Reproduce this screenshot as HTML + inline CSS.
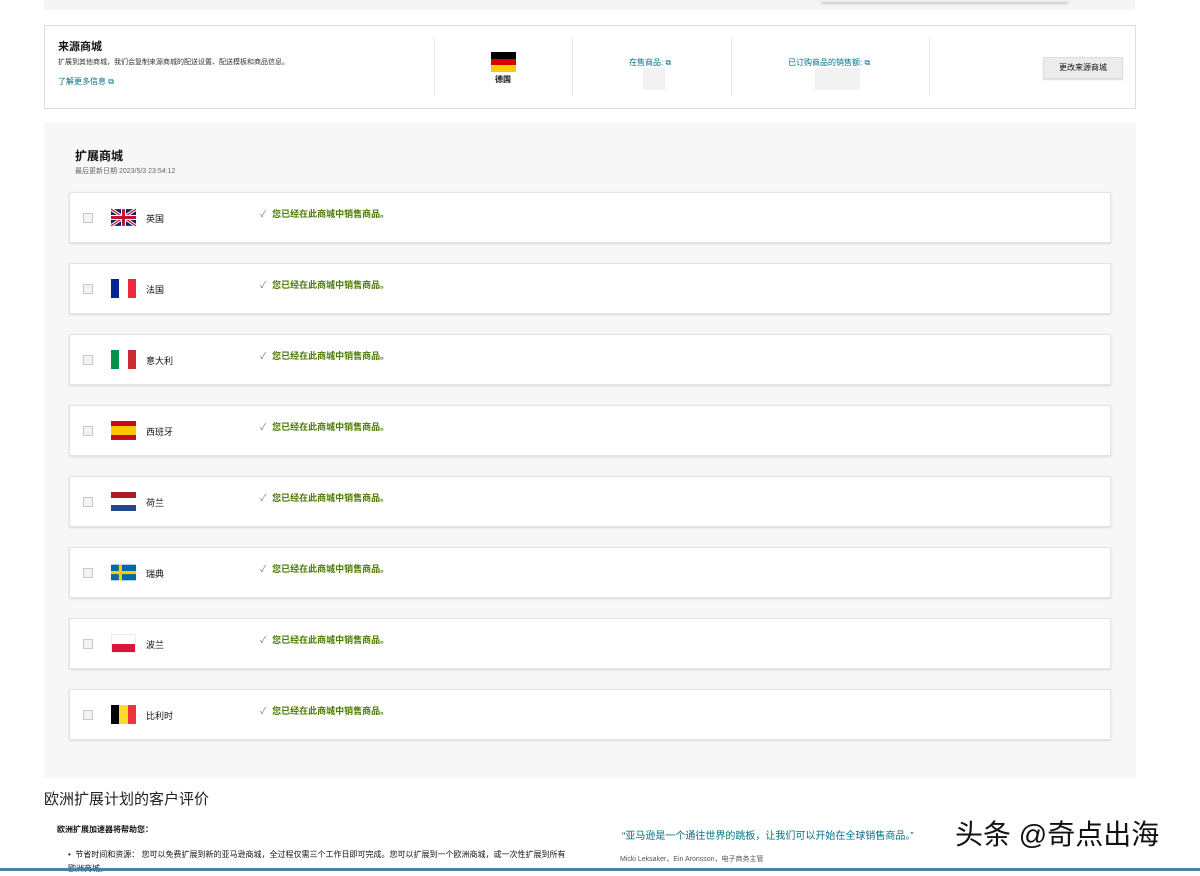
<!DOCTYPE html>
<html><head><meta charset="utf-8"><style>
*{margin:0;padding:0;box-sizing:border-box}
body{width:1200px;height:871px;overflow:hidden;background:#fff;font-family:"Liberation Sans","Noto Sans CJK SC",sans-serif;color:#111;position:relative}
.a{position:absolute}
.card{position:absolute;left:69px;width:1042px;height:51px;background:#fff;border:1px solid #e3e3e3;box-shadow:0 1px 2px rgba(0,0,0,.12)}
.cb{position:absolute;left:13px;top:20px;width:10px;height:10px;border:1px solid #c8c8c8;background:#f3f3f3}
.flag{position:absolute;left:41px;top:15px;width:25px;height:19px}
.nm{position:absolute;left:76px;top:19px;font-size:9px;color:#111}
.ok{position:absolute;left:190px;top:14px;font-size:9px;color:#4a7a00;font-weight:bold}
.ok span{color:#777;font-weight:normal;margin-right:6px}
.lnk{color:#007185;font-size:8px}
</style></head><body>
<div class="a" style="left:44px;top:0;width:1091px;height:10px;background:#f5f5f5"></div>
<div class="a" style="left:822px;top:0;width:246px;height:2px;box-shadow:0 1px 3px rgba(0,0,0,.35);background:#eee"></div>

<div class="a" style="left:44px;top:25px;width:1092px;height:84px;border:1px solid #ddd;background:#fff">
  <div class="a" style="left:13px;top:12px;font-size:11px;font-weight:bold">来源商城</div>
  <div class="a" style="left:13px;top:31px;font-size:7px;color:#333">扩展到其他商城，我们会复制来源商城的配送设置、配送模板和商品信息。</div>
  <div class="a lnk" style="left:13px;top:50px">了解更多信息 ⧉</div>
  <div class="a" style="left:389px;top:12px;width:1px;height:58px;background:#e6e6e6"></div>
  <div class="a" style="left:446px;top:26px;width:25px;height:20px"><div style="height:33.3%;background:#000"></div><div style="height:33.3%;background:#d00"></div><div style="height:33.4%;background:#fc0"></div></div>
  <div class="a" style="left:450px;top:48px;font-size:8px;font-weight:bold">德国</div>
  <div class="a" style="left:527px;top:12px;width:1px;height:58px;background:#e6e6e6"></div>
  <div class="a lnk" style="left:584px;top:31px">在售商品: ⧉</div>
  <div class="a" style="left:598px;top:42px;width:22px;height:22px;background:#f2f2f2"></div>
  <div class="a" style="left:686px;top:12px;width:1px;height:58px;background:#e6e6e6"></div>
  <div class="a lnk" style="left:743px;top:31px">已订购商品的销售额: ⧉</div>
  <div class="a" style="left:770px;top:42px;width:45px;height:22px;background:#f2f2f2"></div>
  <div class="a" style="left:884px;top:12px;width:1px;height:58px;background:#e6e6e6"></div>
  <div class="a" style="left:998px;top:31px;width:80px;height:22px;background:#ececec;border:1px solid #ddd;box-shadow:0 1px 1px rgba(0,0,0,.15);font-size:8px;text-align:center;line-height:20px">更改来源商城</div>
</div>

<div class="a" style="left:44px;top:123px;width:1092px;height:655px;background:#f7f7f7"></div>
<div class="a" style="left:75px;top:147px;font-size:12px;font-weight:bold">扩展商城</div>
<div class="a" style="left:75px;top:166px;font-size:7px;color:#666">最后更新日期 2023/5/3 23:54:12</div>

<div class="card" style="top:192px"><div class="cb"></div>
<svg class="flag" viewBox="0 0 60 40"><rect width="60" height="40" fill="#012169"/><path d="M0,0L60,40M60,0L0,40" stroke="#fff" stroke-width="8"/><path d="M0,0L60,40M60,0L0,40" stroke="#c8102e" stroke-width="3"/><path d="M30,0V40M0,20H60" stroke="#fff" stroke-width="12"/><path d="M30,0V40M0,20H60" stroke="#c8102e" stroke-width="7"/></svg>
<div class="nm">英国</div><div class="ok"><span>✓</span>您已经在此商城中销售商品。</div></div>

<div class="card" style="top:263px"><div class="cb"></div>
<div class="flag" style="display:flex"><div style="flex:1;background:#002395"></div><div style="flex:1;background:#fff"></div><div style="flex:1;background:#ed2939"></div></div>
<div class="nm">法国</div><div class="ok"><span>✓</span>您已经在此商城中销售商品。</div></div>

<div class="card" style="top:334px"><div class="cb"></div>
<div class="flag" style="display:flex"><div style="flex:1;background:#009246"></div><div style="flex:1;background:#fff"></div><div style="flex:1;background:#ce2b37"></div></div>
<div class="nm">意大利</div><div class="ok"><span>✓</span>您已经在此商城中销售商品。</div></div>

<div class="card" style="top:405px"><div class="cb"></div>
<div class="flag"><div style="height:25%;background:#c60b1e"></div><div style="height:50%;background:#ffc400"></div><div style="height:25%;background:#c60b1e"></div></div>
<div class="nm">西班牙</div><div class="ok"><span>✓</span>您已经在此商城中销售商品。</div></div>

<div class="card" style="top:476px"><div class="cb"></div>
<div class="flag"><div style="height:33.3%;background:#ae1c28"></div><div style="height:33.3%;background:#fff"></div><div style="height:33.4%;background:#21468b"></div></div>
<div class="nm">荷兰</div><div class="ok"><span>✓</span>您已经在此商城中销售商品。</div></div>

<div class="card" style="top:547px"><div class="cb"></div>
<svg class="flag" viewBox="0 0 16 10"><rect width="16" height="10" fill="#006aa7"/><path d="M0,5H16M6,0V10" stroke="#fecc00" stroke-width="2"/></svg>
<div class="nm">瑞典</div><div class="ok"><span>✓</span>您已经在此商城中销售商品。</div></div>

<div class="card" style="top:618px"><div class="cb"></div>
<div class="flag" style="border:1px solid #eee"><div style="height:50%;background:#fff"></div><div style="height:50%;background:#dc143c"></div></div>
<div class="nm">波兰</div><div class="ok"><span>✓</span>您已经在此商城中销售商品。</div></div>

<div class="card" style="top:689px"><div class="cb"></div>
<div class="flag" style="display:flex"><div style="flex:1;background:#000"></div><div style="flex:1;background:#fdda24"></div><div style="flex:1;background:#ef3340"></div></div>
<div class="nm">比利时</div><div class="ok"><span>✓</span>您已经在此商城中销售商品。</div></div>

<div class="a" style="left:44px;top:788px;font-size:15px;color:#222">欧洲扩展计划的客户评价</div>
<div class="a" style="left:57px;top:824px;font-size:8px;font-weight:bold">欧洲扩展加速器将帮助您：</div>
<div class="a" style="left:68px;top:848px;font-size:8px;width:500px;line-height:14px">•&nbsp; 节省时间和资源： 您可以免费扩展到新的亚马逊商城，全过程仅需三个工作日即可完成。您可以扩展到一个欧洲商城，或一次性扩展到所有欧洲商城。</div>
<div class="a" style="left:622px;top:827px;font-size:10px;color:#007185">“亚马逊是一个通往世界的跳板，让我们可以开始在全球销售商品。”</div>
<div class="a" style="left:620px;top:854px;font-size:7px;color:#555">Micki Leksaker，Ein Aronsson，电子商务主管</div>
<div class="a" style="left:955px;top:813px;font-size:28px;color:#111">头条 @奇点出海</div>
<div class="a" style="left:0;top:868px;width:1200px;height:3px;background:#4a7fa8"></div>
</body></html>
